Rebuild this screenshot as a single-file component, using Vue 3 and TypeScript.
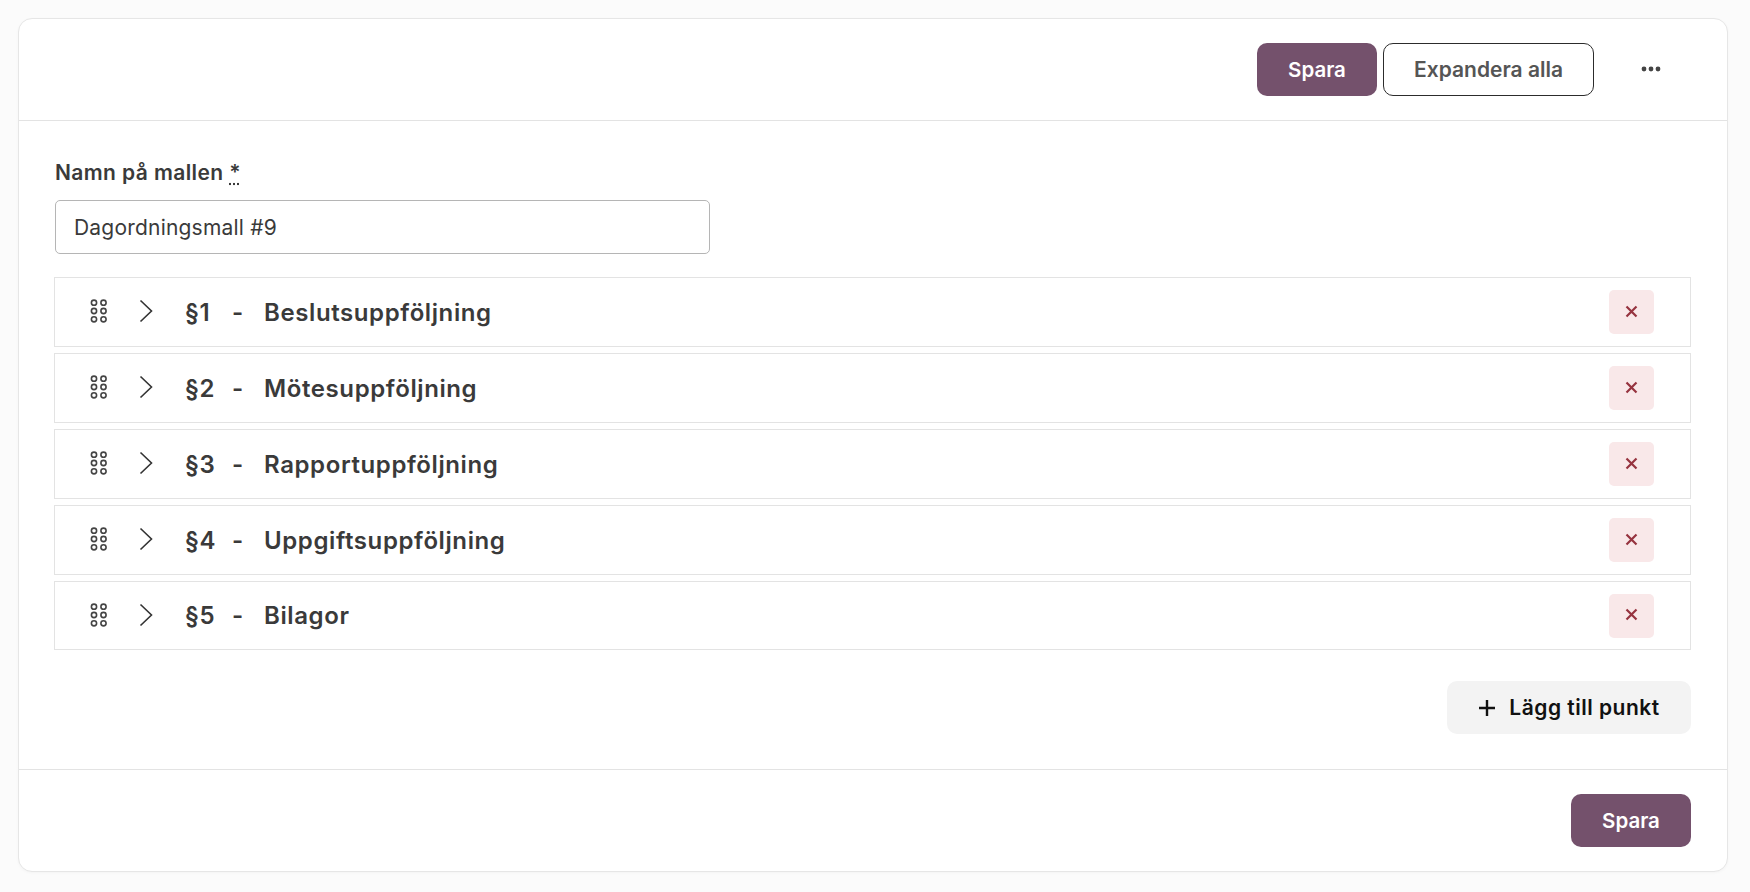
<script setup lang="ts">
const items = [
  { n: '§1', t: 'Beslutsuppföljning' },
  { n: '§2', t: 'Mötesuppföljning' },
  { n: '§3', t: 'Rapportuppföljning' },
  { n: '§4', t: 'Uppgiftsuppföljning' },
  { n: '§5', t: 'Bilagor' },
]
const dots = [
  [4, 3.7], [13.5, 3.7], [4, 12], [13.5, 12], [4, 20.3], [13.5, 20.3],
]
</script>

<template>
  <div class="page">
    <section class="card">
      <header class="top">
        <button class="btn primary">Spara</button>
        <button class="btn outline">Expandera alla</button>
        <button class="more" aria-label="Mer">
          <svg width="20" height="6" viewBox="0 0 20 6"><circle cx="3" cy="3" r="2.4" /><circle cx="10" cy="3" r="2.4" /><circle cx="17" cy="3" r="2.4" /></svg>
        </button>
      </header>
      <div class="body">
        <label class="label">Namn på mallen <abbr>*</abbr></label>
        <input class="input" value="Dagordningsmall #9" />
        <ul class="list">
          <li v-for="item in items" :key="item.n" class="row">
            <svg class="grip" width="18" height="24" viewBox="0 0 18 24">
              <circle v-for="(d, i) in dots" :key="i" :cx="d[0]" :cy="d[1]" r="2.6" />
            </svg>
            <svg class="chev" width="14" height="24" viewBox="0 0 14 24"><path d="M1.5 1.5 12.5 12 1.5 22.5" /></svg>
            <span class="num">{{ item.n }}</span>
            <span class="dash">-</span>
            <span class="title">{{ item.t }}</span>
            <button class="del" aria-label="Ta bort">
              <svg width="13" height="13" viewBox="0 0 13 13"><path d="M1.5 1.5 11.5 11.5M11.5 1.5 1.5 11.5" /></svg>
            </button>
          </li>
        </ul>
        <div class="add-wrap">
          <button class="add">
            <svg width="18" height="18" viewBox="0 0 18 18"><path d="M9 1v16M1 9h16" /></svg>
            Lägg till punkt
          </button>
        </div>
      </div>
      <footer class="bottom">
        <button class="btn primary wide">Spara</button>
      </footer>
    </section>
  </div>
</template>

<style>
html, body { background: #fbfbfb; }
</style>

<style scoped>
.page {
  padding: 18px 22px 20px 18px;
  font-family: "Inter", "Noto Sans", sans-serif;
  color: #3a3a3a;
}
.card {
  background: #fff;
  border: 1px solid #e6e6e6;
  border-radius: 14px;
  box-shadow: 0 1px 3px rgba(0, 0, 0, 0.03);
  height: 854px;
  box-sizing: border-box;
  display: flex;
  flex-direction: column;
}
.top {
  height: 102px;
  box-sizing: border-box;
  border-bottom: 1px solid #e3e3e3;
  display: flex;
  align-items: center;
  justify-content: flex-end;
  padding: 0 66px 0 0;
  gap: 6px;
}
button { font-family: inherit; cursor: pointer; }
.btn {
  height: 53px;
  box-sizing: border-box;
  border-radius: 10px;
  font-size: 21px;
  font-weight: 600;
  padding: 0 0 1px;
}
.primary {
  width: 120px;
  background: #74516c;
  color: #fff;
  border: none;
  font-size: 20.5px;
}
.outline {
  width: 211px;
  background: #fff;
  color: #555;
  border: 1px solid #2c2c2c;
}
.more {
  background: none;
  border: none;
  padding: 0 0 2px;
  margin-left: 41px;
  width: 20px;
  height: 18px;
  display: flex;
  align-items: center;
  justify-content: center;
}
.more svg { fill: #444; }
.body {
  flex: 1;
  padding: 38px 36px 0 36px;
  display: flex;
  flex-direction: column;
}
.label {
  font-size: 21px;
  letter-spacing: 0.4px;
  font-weight: 600;
  line-height: 27px;
  color: #3a3a3a;
}
abbr {
  text-decoration: underline dotted;
  text-underline-offset: 3px;
}
.input {
  margin-top: 14px;
  width: 655px;
  height: 54px;
  box-sizing: border-box;
  border: 1px solid #b5b5b5;
  border-radius: 5px;
  padding: 0 18px;
  font: 400 21px "Inter", "Noto Sans", sans-serif;
  letter-spacing: 0.2px;
  color: #3a3a3a;
  outline: none;
}
.list {
  list-style: none;
  margin: 23px 0 0 -1px;
  padding: 0;
  display: flex;
  flex-direction: column;
  gap: 6px;
}
.row {
  height: 70px;
  box-sizing: border-box;
  border: 1px solid #e3e3e3;
  display: flex;
  align-items: center;
  font-size: 24px;
  letter-spacing: 0.6px;
  font-weight: 600;
  color: #3a3a3a;
  padding: 0 36px 0 35px;
}
.row:last-child { height: 69px; }
.grip { fill: none; stroke: #444; stroke-width: 1.6; flex: none; margin-bottom: 2px; }
.chev { fill: none; stroke: #333; stroke-width: 1.6; margin: 0 0 2px 31px; flex: none; }
.num { margin-left: 32px; width: 47px; flex: none; }
.dash { width: 32px; flex: none; }
.title { flex: 1; }
.del {
  width: 45px;
  height: 44px;
  border: none;
  border-radius: 5px;
  background: #f9e8e9;
  padding: 0 0 2px;
  display: flex;
  align-items: center;
  justify-content: center;
}
.del svg { fill: none; stroke: #96333f; stroke-width: 2.2; }
.add-wrap {
  margin-top: 31px;
  display: flex;
  justify-content: flex-end;
}
.add {
  width: 244px;
  height: 53px;
  border: none;
  border-radius: 10px;
  background: #f3f3f3;
  color: #111;
  font-size: 21px;
  letter-spacing: 0.5px;
  font-weight: 600;
  display: flex;
  align-items: center;
  justify-content: center;
  gap: 13px;
  padding: 0;
}
.add svg { fill: none; stroke: #111; stroke-width: 2.4; }
.bottom {
  height: 102px;
  box-sizing: border-box;
  border-top: 1px solid #e3e3e3;
  display: flex;
  justify-content: flex-end;
  padding: 24px 36px 0 0;
}
</style>
